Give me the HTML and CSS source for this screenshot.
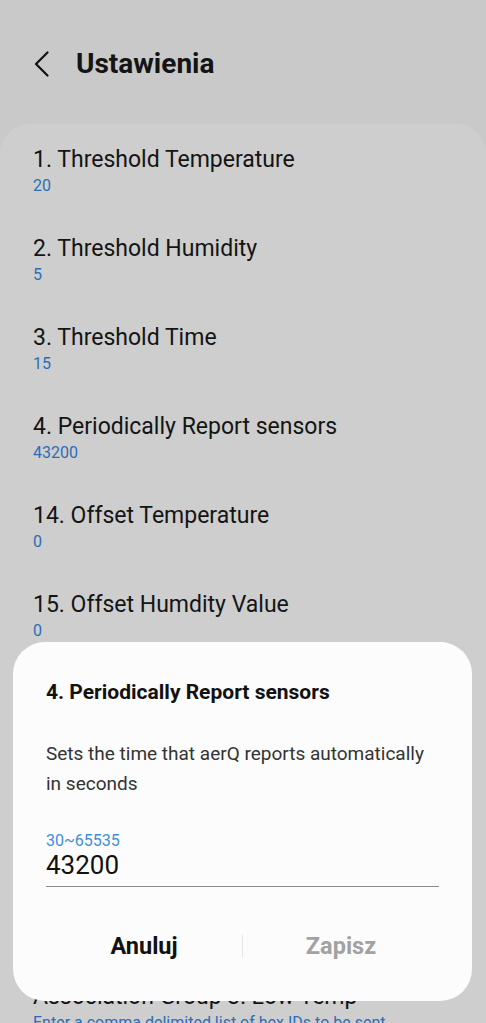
FILE: index.html
```html
<!DOCTYPE html>
<html lang="pl">
<head>
<meta charset="utf-8">
<title>Ustawienia</title>
<link rel="stylesheet" href="styles.css">
</head>
<body>
<header class="header">
  <svg class="back" width="16" height="26" viewBox="0 0 16 26" aria-hidden="true">
    <polyline points="13.5,1.5 2,13 13.5,24.5" fill="none" stroke="#111" stroke-width="2.2" stroke-linecap="round" stroke-linejoin="round"/>
  </svg>
  <h1 class="title">Ustawienia</h1>
</header>

<main class="card">
  <div class="item"><div class="item-title">1. Threshold Temperature</div><div class="item-value">20</div></div>
  <div class="item"><div class="item-title">2. Threshold Humidity</div><div class="item-value">5</div></div>
  <div class="item"><div class="item-title">3. Threshold Time</div><div class="item-value">15</div></div>
  <div class="item"><div class="item-title">4. Periodically Report sensors</div><div class="item-value">43200</div></div>
  <div class="item"><div class="item-title">14. Offset Temperature</div><div class="item-value">0</div></div>
  <div class="item"><div class="item-title">15. Offset Humdity Value</div><div class="item-value">0</div></div>
  <div class="item"><div class="item-title">Association Group 1: Lifeline</div><div class="item-value">1</div></div>
  <div class="item"><div class="item-title">Association Group 2: High Temp</div><div class="item-value">Enter a comma delimited list of hex IDs to be sent</div></div>
  <div class="item item--desc"><div class="item-title">Association Group 2: High Humidity</div><div class="item-value">Enter a comma delimited list of hex IDs to be sent basic set commands when the threshold is exceeded</div></div>
  <div class="item"><div class="item-title">Association Group 3: Low Temp</div><div class="item-value">Enter a comma delimited list of hex IDs to be sent</div></div>
</main>

<div class="dialog" role="dialog">
  <h2 class="dialog-title">4. Periodically Report sensors</h2>
  <p class="dialog-text">Sets the time that aerQ reports automatically in seconds</p>
  <div class="field">
    <div class="field-label">30~65535</div>
    <div class="field-value">43200</div>
  </div>
  <div class="actions">
    <button class="btn btn--cancel">Anuluj</button>
    <span class="sep"></span>
    <button class="btn btn--save">Zapisz</button>
  </div>
</div>
</body>
</html>
```

FILE: styles.css
```css
html, body {
  margin: 0;
  padding: 0;
}
body {
  background: #c9c9c9;
  font-family: Roboto, "Noto Sans", "Liberation Sans", sans-serif;
  color: #111;
  height: 1023px;
  overflow: hidden;
}

.header {
  display: flex;
  align-items: center;
  padding: 46px 0 0 34px;
  height: 36px;
  margin-bottom: 42px;
}
.back {
  display: block;
  flex: none;
}
.title {
  margin: 0 0 0 26px;
  font-size: 28px;
  line-height: 36px;
  font-weight: 700;
  color: #141414;
}

.card {
  background: #cecece;
  border-radius: 30px 30px 0 0;
  padding-top: 2px;
}
.item {
  padding: 20px 33px 19px;
}
.item--desc {
  padding-bottom: 35px;
}
.item-title {
  font-size: 23px;
  line-height: 28px;
  color: #141414;
}
.item-value {
  margin-top: 2px;
  font-size: 16px;
  line-height: 20px;
  color: #2b6db6;
}

.dialog {
  position: fixed;
  left: 13px;
  right: 14px;
  bottom: 22px;
  background: #fcfcfc;
  border-radius: 32px;
  padding: 37px 33px 41px;
}
.dialog-title {
  margin: 0;
  font-size: 21px;
  line-height: 26px;
  font-weight: 700;
  color: #111;
}
.dialog-text {
  margin: 34px 0 0;
  font-size: 19px;
  line-height: 30px;
  color: #333;
}
.field {
  margin-top: 33px;
  border-bottom: 1px solid #8a8a8a;
  padding-bottom: 6px;
}
.field-label {
  font-size: 16px;
  line-height: 18px;
  color: #3d8fdb;
}
.field-value {
  font-size: 26px;
  line-height: 30px;
  color: #111;
}
.actions {
  display: flex;
  align-items: center;
  margin-top: 45px;
}
.btn {
  flex: 1;
  border: 0;
  background: none;
  padding: 0;
  font-family: inherit;
  font-size: 23.5px;
  line-height: 28px;
  font-weight: 700;
}
.btn--cancel { color: #111; }
.btn--save { color: #a2a2a2; }
.sep {
  width: 1px;
  height: 22px;
  background: #e6e6e6;
}
```
